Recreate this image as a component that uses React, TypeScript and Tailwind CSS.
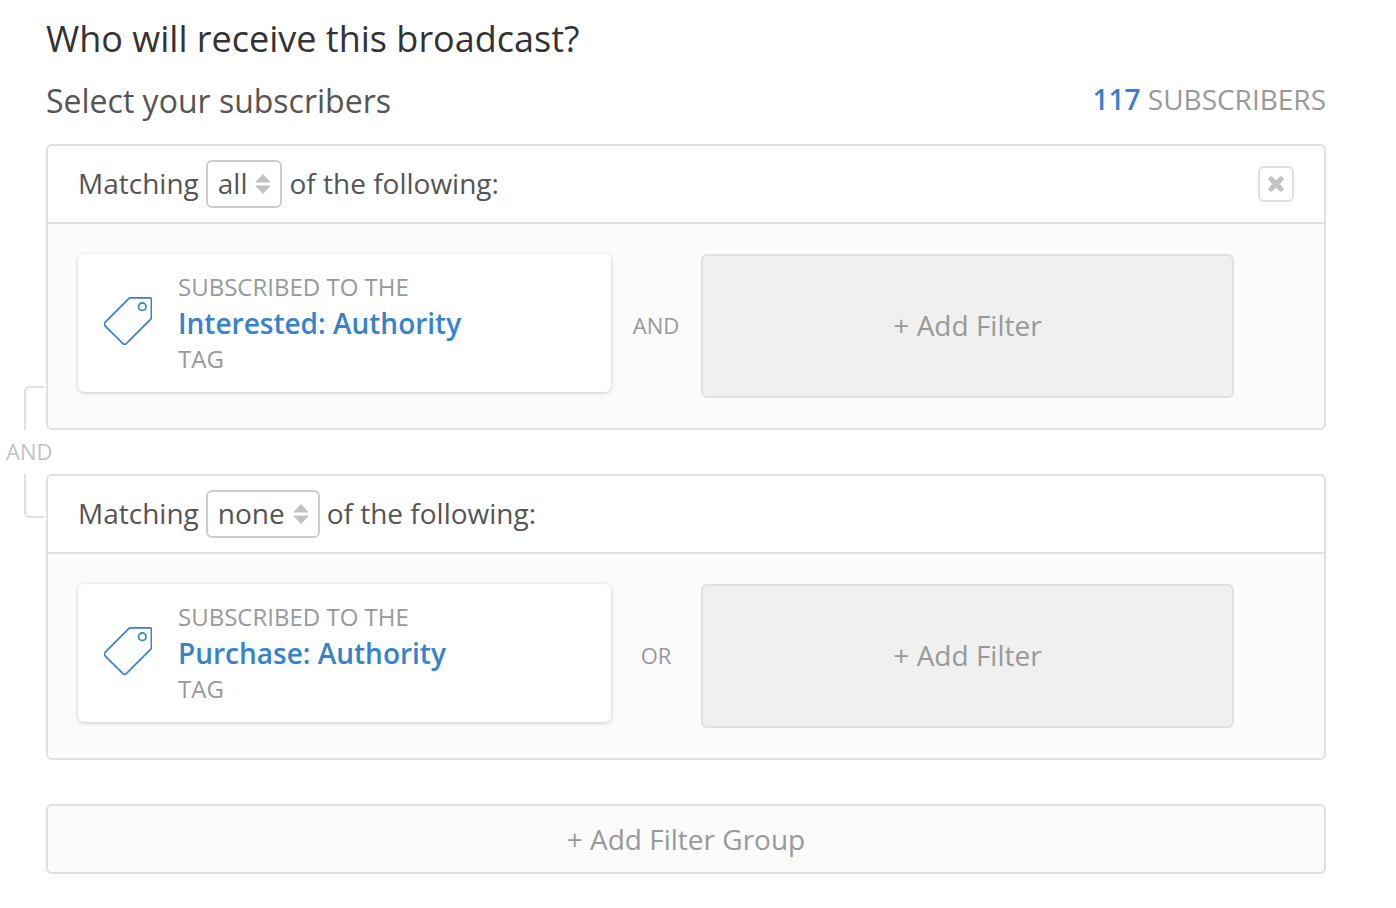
import { Fragment } from "react";

interface FilterGroup {
    id: string
    match: string
    joiner: string
    tag: string
    removable: boolean
}

const groups: FilterGroup[] = [
    {
        id: "include",
        match: "all",
        joiner: "AND",
        tag: "Interested: Authority",
        removable: true,
    },
    {
        id: "exclude",
        match: "none",
        joiner: "OR",
        tag: "Purchase: Authority",
        removable: false,
    },
]

function TagIcon() {
    return (
        <svg className="mb-1 size-12 shrink-0" viewBox="0.5 1 48.5 48.5" fill="none" stroke="#3782cd" aria-hidden="true">
            <path
                d="M27.4 1.9H46.8Q48.4 1.9 48.4 3.5V21.6Q48.4 22.8 47.5 23.7L23 48.2Q21.3 49.6 19.6 48.2L1.6 30.2Q0.2 28.4 1.6 26.7L25.5 2.7Q26.3 1.9 27.4 1.9Z"
                strokeWidth="1.7"
            />
            <circle cx="39.2" cy="10.8" r="3.8" strokeWidth="1.7" />
        </svg>
    )
}

function MatchSelect({ id, value }: { id: string; value: string }) {
    return (
        <span className="relative inline-flex">
            <select
                id={id}
                defaultValue={value}
                className="h-12 appearance-none rounded-md border-2 border-[#cccccc] bg-white pr-[33px] pb-0.5 pl-[10px] leading-10 [field-sizing:content]"
            >
                <option value="all">all</option>
                <option value="any">any</option>
                <option value="none">none</option>
            </select>
            <svg
                className="pointer-events-none absolute top-3.5 right-3 h-5 w-3.5"
                viewBox="0 0 14 20"
                fill="#c2c2c2"
                aria-hidden="true"
            >
                <path d="M7 0L14 7.5V8.5H0V7.5Z" />
                <path d="M7 20L14 12.5V11.5H0V12.5Z" />
            </svg>
        </span>
    )
}

function GroupCard({ group }: { group: FilterGroup }) {
    const selectId = `match-${group.id}`

    return (
        <section className="overflow-hidden rounded-md border-2 border-[#e0e0e0]">
            {/* Group header */}
            <div className="flex h-[78px] items-center justify-between border-b-2 border-[#e0e0e0] px-[30px]">
                <div className="flex items-start gap-[7px] leading-[46px]">
                    <label htmlFor={selectId}>Matching</label>
                    <MatchSelect id={selectId} value={group.match} />
                    <span>of the following:</span>
                </div>
                {group.removable && (
                    <button
                        type="button"
                        aria-label="Remove filter group"
                        className="flex size-9 items-center justify-center rounded-md border-2 border-[#e0e0e0] bg-white"
                    >
                        <svg className="size-4" viewBox="0 0 16 16" stroke="#c2c2c2" strokeWidth="5" strokeLinecap="round" aria-hidden="true">
                            <path d="M3 3L13 13M13 3L3 13" />
                        </svg>
                    </button>
                )}
            </div>

            {/* Filters */}
            <div className="grid grid-cols-[1fr_90px_1fr_60px] items-start bg-[#fbfbfb] p-[30px]">
                <button
                    type="button"
                    className="flex h-[138px] items-center gap-[26px] rounded-md bg-white px-[26px] text-left text-2xl text-[#999999] shadow-[0_1px_4px_rgba(0,0,0,0.2)]"
                >
                    <TagIcon />
                    <span className="flex flex-col">
                        <span className="leading-9">SUBSCRIBED TO THE</span>
                        <span className="text-[28px] leading-9 font-semibold text-[#3782cd]">{group.tag}</span>
                        <span className="leading-9">TAG</span>
                    </span>
                </button>
                <span className="self-center pb-0.5 text-center text-[22px] leading-9 text-[#999999]">{group.joiner}</span>
                <button
                    type="button"
                    className="h-36 rounded-md border-2 border-[#e0e0e0] bg-[#f0f0f0] pb-0.5 text-[#999999]"
                >
                    + Add Filter
                </button>
            </div>
        </section>
    )
}

function GroupConnector() {
    return (
        <div className="relative h-11">
            <div className="absolute bottom-full -left-[22px] h-11 w-5 rounded-tl-md border-t-2 border-l-2 border-[#e0e0e0]" />
            <span className="absolute -left-10 text-[22px] leading-[42px] text-[#c2c2c2]">AND</span>
            <div className="absolute top-full -left-[22px] h-11 w-5 rounded-bl-md border-b-2 border-l-2 border-[#e0e0e0]" />
        </div>
    )
}

export default function App() {
    return (
        <main className="min-h-screen bg-white pt-[15px] pr-[70px] pb-8 pl-[46px] font-['Open_Sans',sans-serif] text-[28px] leading-10 text-[#555555]">
            <h1 className="text-4xl leading-12 text-[#333333]">Who will receive this broadcast?</h1>
            <div className="mt-[14px] mb-[19px] flex items-start justify-between">
                <h2 className="text-[32px] leading-12">Select your subscribers</h2>
                <p className="leading-11 text-[#999999]">
                    <strong className="font-semibold text-[#3782cd]">117</strong> SUBSCRIBERS
                </p>
            </div>

            {groups.map((group, index) => (
                <Fragment key={group.id}>
                    {index > 0 && <GroupConnector />}
                    <GroupCard group={group} />
                </Fragment>
            ))}

            <button
                type="button"
                className="mt-11 h-[70px] w-full rounded-md border-2 border-[#e0e0e0] bg-[#fbfbfb] text-[#999999]"
            >
                + Add Filter Group
            </button>
        </main>
    )
}
